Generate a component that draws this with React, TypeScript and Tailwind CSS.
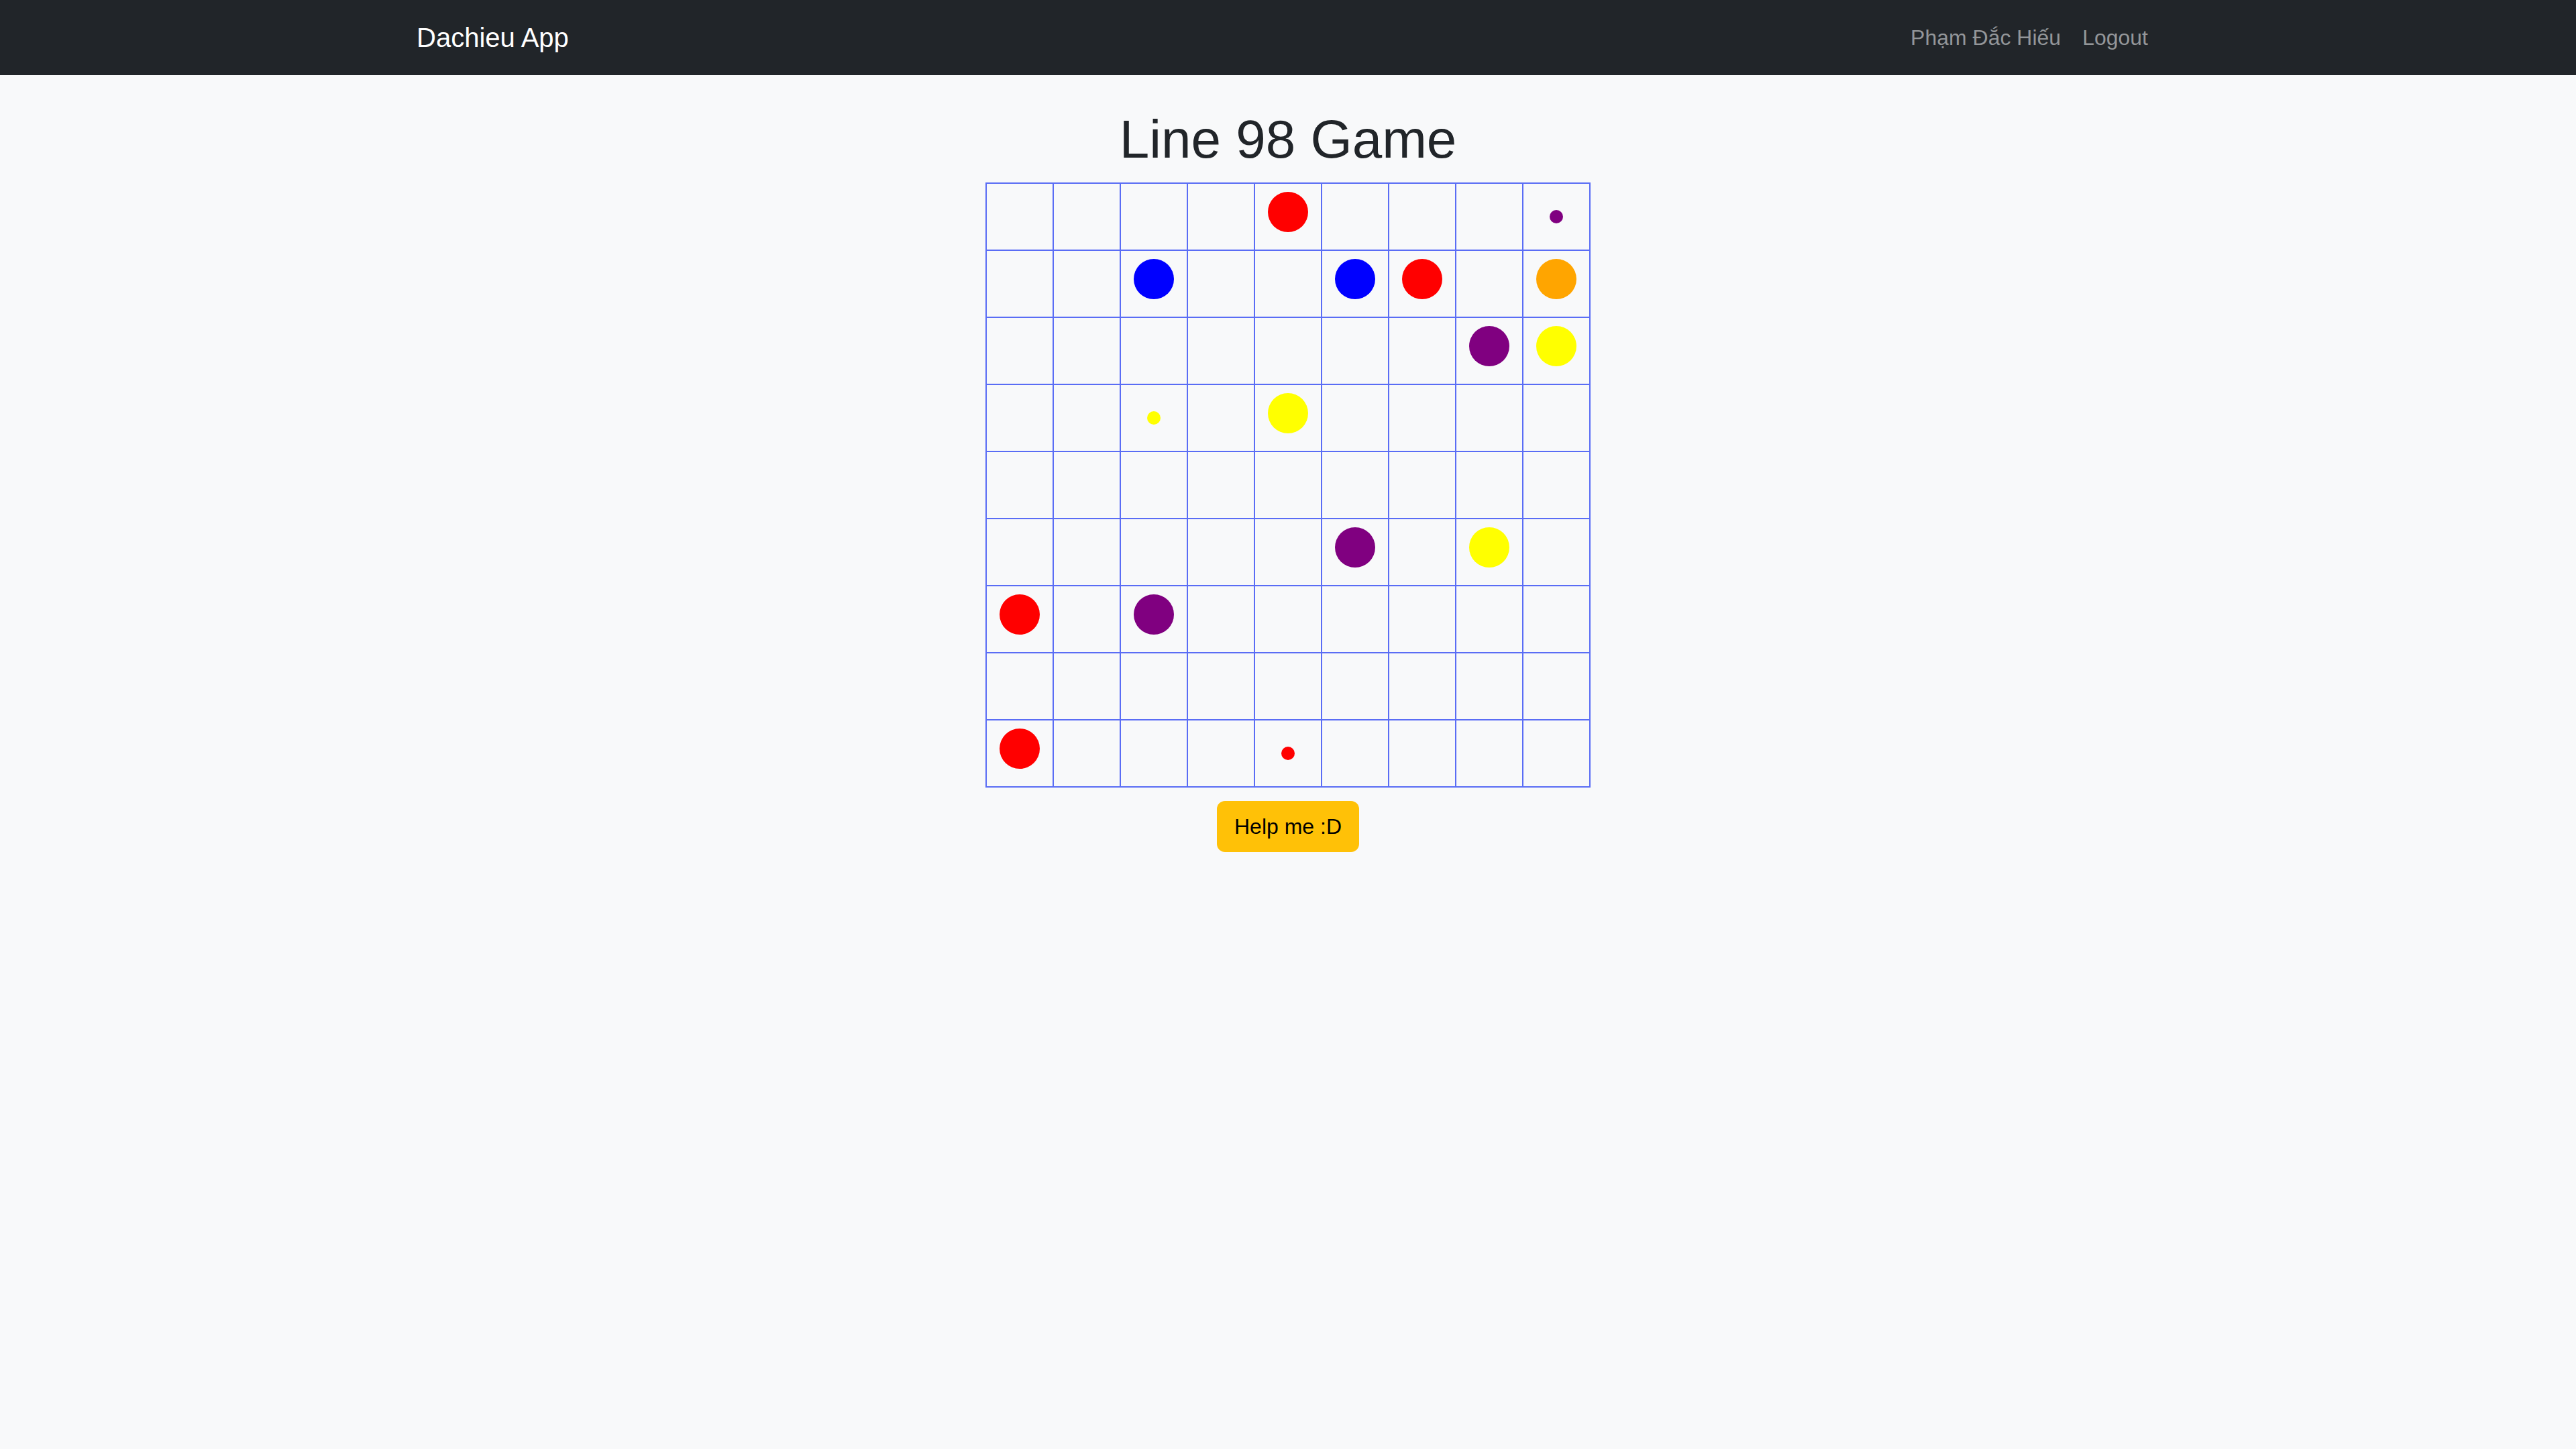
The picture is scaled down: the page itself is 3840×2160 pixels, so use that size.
import React from "react";

type Ball = { color: string; small?: boolean };

// board state: row -> col -> ball
const board: Record<string, Ball> = {
  "0-4": { color: "#ff0000" },
  "0-8": { color: "#800080", small: true },
  "1-2": { color: "#0000ff" },
  "1-5": { color: "#0000ff" },
  "1-6": { color: "#ff0000" },
  "1-8": { color: "#ffa500" },
  "2-7": { color: "#800080" },
  "2-8": { color: "#ffff00" },
  "3-2": { color: "#ffff00", small: true },
  "3-4": { color: "#ffff00" },
  "5-5": { color: "#800080" },
  "5-7": { color: "#ffff00" },
  "6-0": { color: "#ff0000" },
  "6-2": { color: "#800080" },
  "8-0": { color: "#ff0000" },
  "8-4": { color: "#ff0000", small: true },
};

const Cell = ({ ball }: { ball?: Ball }) => {
  if (!ball) {
    return <div className="w-[100px] h-[100px] border border-[#5a6df5]" />;
  }
  if (ball.small) {
    return (
      <div className="w-[100px] h-[100px] border border-[#5a6df5] flex items-center justify-center">
        <div className="w-[20px] h-[20px] rounded-full" style={{ background: ball.color }} />
      </div>
    );
  }
  return (
    <div className="w-[100px] h-[100px] border border-[#5a6df5] flex justify-center items-start pt-[12px]">
      <div className="w-[60px] h-[60px] rounded-full" style={{ background: ball.color }} />
    </div>
  );
};

const App = () => {
  const rows = Array.from({ length: 9 }, (_, i) => i);

  return (
    <div className="min-h-screen bg-[#f8f9fa] font-['Liberation_Sans',Arial,sans-serif] text-[#212529]">
      <nav className="h-[112px] bg-[#212529]">
        <div className="mx-auto w-[2598px] h-full flex items-center justify-between">
          <span className="text-[40px] text-white leading-none">Dachieu App</span>
          <div className="flex items-center gap-[32px] pr-[17px] text-[32px] text-[#939699] leading-none">
            <span>Phạm Đắc Hiếu</span>
            <span>Logout</span>
          </div>
        </div>
      </nav>

      <main className="flex flex-col items-center">
        <h1 className="mt-[48px] text-[80px] leading-[1.2] font-normal">Line 98 Game</h1>
        <div className="mt-[16px] grid grid-cols-9 border border-[#5a6df5]">
          {rows.map((r) =>
            rows.map((c) => <Cell key={`${r}-${c}`} ball={board[`${r}-${c}`]} />)
          )}
        </div>
        <button className="mt-[20px] w-[212px] h-[76px] rounded-[12px] bg-[#ffc107] text-[32px] text-black">
          Help me :D
        </button>
      </main>
    </div>
  );
};

export default App;
